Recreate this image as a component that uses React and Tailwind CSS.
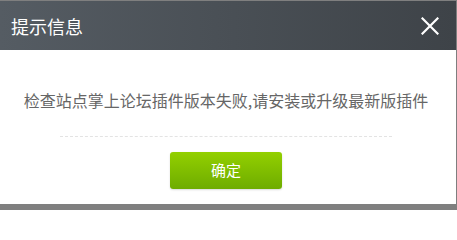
import React from 'react';

export default function App() {
  return (
    <div
      className="w-[457px] h-[210px] bg-[#7f7f7f] pt-px pr-px"
      style={{ fontFamily: '"Microsoft YaHei", "Noto Sans CJK SC", sans-serif' }}
    >
      <div className="w-[456px] h-[203px] flex flex-col">
        {/* header */}
        <div className="h-[49px] flex items-center justify-between pl-[11px] pr-[17px] bg-gradient-to-r from-[#555c63] to-[#3e4348]">
          <span className="text-[18px] leading-none text-white">提示信息</span>
          <svg width="18" height="18" viewBox="0 0 18 18" className="text-white">
            <path d="M1.5 1.5 L16.5 16.5 M16.5 1.5 L1.5 16.5" stroke="currentColor" strokeWidth="2.2" strokeLinecap="square" />
          </svg>
        </div>

        {/* body */}
        <div className="flex-1 bg-white w-[456px]">
          <div className="w-[452px] flex flex-col items-center pt-[40px]">
            <p className="text-[16px] leading-[20px] text-[#666666]">
              检查站点掌上论坛插件版本失败,请安装或升级最新版插件
            </p>
            <div className="mt-[26px] w-[332px] border-t border-dashed border-[#e3e3e3]" />
            <button className="mt-[15px] w-[112px] h-[37px] rounded-[3px] bg-gradient-to-b from-[#93d000] to-[#6eac00] text-white text-[15px] shadow-[0_1px_2px_rgba(0,0,0,0.15)]">
              确定
            </button>
          </div>
        </div>
      </div>
    </div>
  );
}
